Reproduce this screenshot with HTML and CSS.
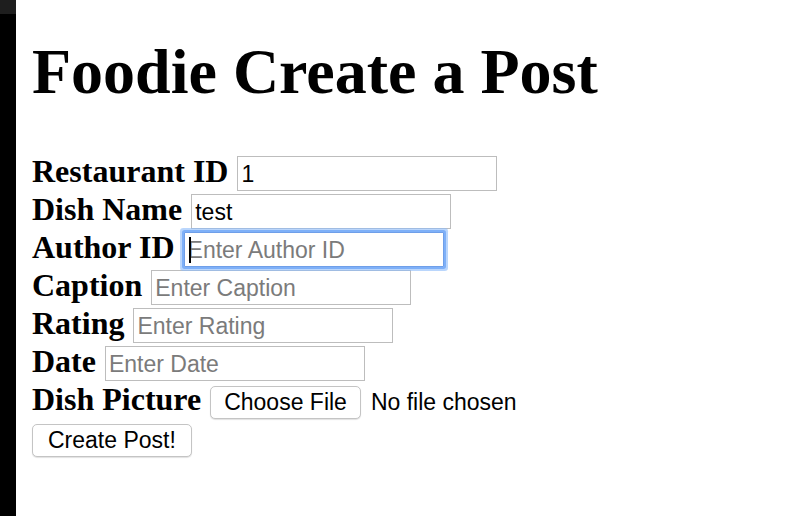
FILE: index.html
```html
<!DOCTYPE html>
<html lang="en">
<head>
<meta charset="utf-8">
<title>Foodie Create a Post</title>
<link rel="stylesheet" href="styles.css">
</head>
<body>
<div class="page">
  <div class="sidebar"><div class="sidebar-top"></div></div>
  <main class="content">
    <h1 class="title">Foodie Create a Post</h1>
    <form class="post-form">
      <div class="row">
        <label class="field-label" for="rid">Restaurant ID</label>
        <input class="text-input" id="rid" type="text" value="1" placeholder="Enter Restaurant ID">
      </div>
      <div class="row">
        <label class="field-label" for="dish">Dish Name</label>
        <input class="text-input" id="dish" type="text" value="test" placeholder="Enter Dish Name">
      </div>
      <div class="row">
        <label class="field-label" for="author">Author ID</label>
        <span class="input-wrap">
          <input class="text-input focused" id="author" type="text" placeholder="Enter Author ID">
          <span class="caret"></span>
        </span>
      </div>
      <div class="row">
        <label class="field-label" for="caption">Caption</label>
        <input class="text-input" id="caption" type="text" placeholder="Enter Caption">
      </div>
      <div class="row">
        <label class="field-label" for="rating">Rating</label>
        <input class="text-input" id="rating" type="text" placeholder="Enter Rating">
      </div>
      <div class="row">
        <label class="field-label" for="date">Date</label>
        <input class="text-input" id="date" type="text" placeholder="Enter Date">
      </div>
      <div class="row">
        <label class="field-label" for="pic">Dish Picture</label>
        <span class="file-field">
          <button type="button" class="btn">Choose File</button>
          <span class="file-status">No file chosen</span>
        </span>
      </div>
      <div class="row submit-row">
        <button type="button" class="btn btn-submit">Create Post!</button>
      </div>
    </form>
  </main>
</div>
</body>
</html>
```
FILE: styles.css
```css
html, body {
  margin: 0;
  padding: 0;
  background: #ffffff;
}

.page {
  display: flex;
  min-height: 100vh;
}

.sidebar {
  width: 16px;
  flex: 0 0 16px;
  background: #000000;
}

.sidebar-top {
  height: 14px;
  background: #1e1e1e;
}

.content {
  padding-left: 16px;
}

.title {
  margin: 35px 0 0 0;
  font-family: "Liberation Serif", "Times New Roman", serif;
  font-weight: bold;
  font-size: 64px;
  line-height: 74px;
  color: #000;
}

.post-form {
  margin-top: 46px;
}

.row {
  display: flex;
  align-items: baseline;
  gap: 9px;
  height: 38px;
}

.field-label {
  font-family: "Liberation Serif", "Times New Roman", serif;
  font-weight: bold;
  font-size: 32px;
  line-height: 32px;
  color: #000;
}

.text-input {
  box-sizing: border-box;
  width: 260px;
  height: 35px;
  margin: 0;
  padding: 3px 3px 0 3px;
  border: 1px solid #bdbdbd;
  border-radius: 0;
  background: #fff;
  font-family: "Liberation Sans", Arial, sans-serif;
  font-size: 23px;
  color: #000;
  outline: none;
}

.text-input::placeholder {
  color: #7b7b7b;
  opacity: 1;
}

.input-wrap {
  position: relative;
  display: inline-flex;
}

.text-input.focused {
  border-color: #6f9fe9;
  border-radius: 1px;
  box-shadow: 0 0 0 2px #7eb0f8, 0 0 0 4px rgba(140, 186, 250, 0.6);
}

.caret {
  position: absolute;
  left: 5px;
  top: 5px;
  width: 2px;
  height: 26px;
  background: #000;
}

.file-field {
  display: inline-flex;
  align-items: baseline;
  gap: 10px;
}

.btn {
  box-sizing: border-box;
  height: 33px;
  margin: 0;
  padding: 0 13px;
  border: 1px solid #c4c4c4;
  border-radius: 5px;
  background: #ffffff;
  box-shadow: 0 1px 1px rgba(0, 0, 0, 0.12);
  font-family: "Liberation Sans", Arial, sans-serif;
  font-size: 23px;
  color: #000;
}

.btn-submit {
  padding: 0 15px;
}

.file-status {
  font-family: "Liberation Sans", Arial, sans-serif;
  font-size: 23px;
  color: #000;
}

.submit-row {
  padding-top: 3px;
}
```
